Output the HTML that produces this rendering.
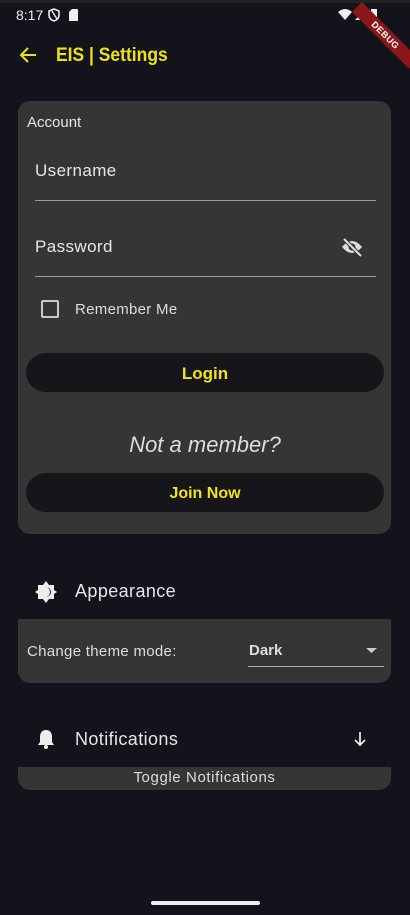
<!DOCTYPE html>
<html><head><style>
body{margin:0;width:410px;height:915px;background:#13141b;font-family:"Liberation Sans",sans-serif;position:relative;overflow:hidden;color:#e6e6e6}
.a{position:absolute}
.card{background:#353535;border-radius:12px}
.btn{background:#16161a;border-radius:20px;color:#f0e41c;font-weight:bold;font-size:17px;text-align:center}
</style></head><body>
<div class="a" style="left:0;top:0;width:410px;height:3px;background:#222"></div>
<div class="a" style="left:16px;top:7px;font-size:14px;color:#eee">8:17</div>
<svg class="a" style="left:48px;top:8px" width="34" height="14"><path d="M6 1l5 2v4c0 3-2 5-5 6-3-1-5-3-5-6V3z" fill="none" stroke="#eee" stroke-width="1.6"/><path d="M4 3l5 8" stroke="#eee" stroke-width="1.4"/><path d="M24 1h5a1 1 0 0 1 1 1v11h-9V4z" fill="#eee"/></svg>
<svg class="a" style="left:338px;top:8px" width="50" height="14"><path d="M0 4q7-6 14 0l-7 8z" fill="#eee"/><path d="M17 12l10-10v10z" fill="#eee"/><rect x="33" y="1" width="6" height="11" fill="#eee"/></svg>
<div class="a" style="left:362px;top:2px;width:80px;height:14px;background:#8b1717;transform:rotate(45deg);transform-origin:0 0;color:#fff;font-size:9px;font-weight:bold;text-align:center;line-height:14px;letter-spacing:0.5px">DEBUG</div>
<svg class="a" style="left:18px;top:45px" width="20" height="20"><path d="M18 10H3M10 3l-7 7 7 7" fill="none" stroke="#ece21c" stroke-width="2"/></svg>
<div class="a" style="left:56px;top:45px;font-size:19px;font-weight:bold;color:#ece21c;transform:scaleX(0.92);transform-origin:0 0">EIS | Settings</div>

<div class="a card" style="left:18px;top:101px;width:373px;height:433px"></div>
<div class="a" style="left:27px;top:114px;font-size:15px">Account</div>
<div class="a" style="left:35px;top:161px;font-size:17px;letter-spacing:0.4px">Username</div>
<div class="a" style="left:35px;top:200px;width:341px;height:1px;background:#9a9a9a"></div>
<div class="a" style="left:35px;top:237px;font-size:17px;letter-spacing:0.4px">Password</div>
<svg class="a" style="left:340px;top:236px" width="24" height="22"><path d="M2 11q10-12 20 0q-10 12-20 0z" fill="#ddd"/><circle cx="12" cy="11" r="3.5" fill="#353535"/><path d="M3 2l18 18" stroke="#353535" stroke-width="4"/><path d="M4 3l17 17" stroke="#ddd" stroke-width="2"/></svg>
<div class="a" style="left:35px;top:276px;width:341px;height:1px;background:#9a9a9a"></div>
<div class="a" style="left:41px;top:300px;width:14px;height:14px;border:2px solid #ccc;border-radius:2px"></div>
<div class="a" style="left:75px;top:301px;font-size:15px;color:#ddd;letter-spacing:0.3px">Remember Me</div>
<div class="a btn" style="left:26px;top:353px;width:358px;height:39px;line-height:41px">Login</div>
<div class="a" style="left:0;width:410px;top:432px;text-align:center;font-size:22px;font-style:italic;color:#ddd">Not a member?</div>
<div class="a btn" style="left:26px;top:473px;width:358px;height:39px;line-height:41px;font-size:16px">Join Now</div>

<svg class="a" style="left:34px;top:580px" width="24" height="24"><path d="M12 1l3 4 5 0 0 5 3 2-3 2 0 5-5 0-3 4-3-4-5 0 0-5-3-2 3-2 0-5 5 0z" fill="#eee"/><path d="M12 7a5 5 0 0 1 0 10a4 5 0 0 0 0-10z" fill="#13141b"/></svg>
<div class="a" style="left:75px;top:581px;font-size:18px;letter-spacing:0.4px">Appearance</div>
<div class="a" style="left:18px;top:619px;width:373px;height:64px;background:#353535;border-radius:0 0 12px 12px"></div>
<div class="a" style="left:27px;top:643px;font-size:15px;color:#ddd;letter-spacing:0.3px">Change theme mode:</div>
<div class="a" style="left:249px;top:642px;font-size:15px;font-weight:bold;color:#ddd">Dark</div>
<svg class="a" style="left:366px;top:648px" width="12" height="6"><path d="M0 0h11l-5.5 5z" fill="#ccc"/></svg>
<div class="a" style="left:248px;top:666px;width:136px;height:1px;background:#aaa"></div>

<svg class="a" style="left:36px;top:728px" width="20" height="22"><path d="M10 2c4 0 6 3 6 7v5l2 3H2l2-3V9c0-4 2-7 6-7z" fill="#eee"/><circle cx="10" cy="19" r="2" fill="#eee"/></svg>
<div class="a" style="left:75px;top:729px;font-size:18px;letter-spacing:0.4px">Notifications</div>
<svg class="a" style="left:353px;top:731px" width="14" height="16"><path d="M7 1v13M2 9l5 5 5-5" fill="none" stroke="#eee" stroke-width="1.7"/></svg>
<div class="a" style="left:18px;top:767px;width:373px;height:23px;background:#353535;border-radius:0 0 12px 12px;text-align:center;font-size:15px;line-height:22px;color:#ddd;letter-spacing:0.6px">Toggle Notifications</div>

<div class="a" style="left:151px;top:901px;width:109px;height:4px;border-radius:2px;background:#eee"></div>
</body></html>
